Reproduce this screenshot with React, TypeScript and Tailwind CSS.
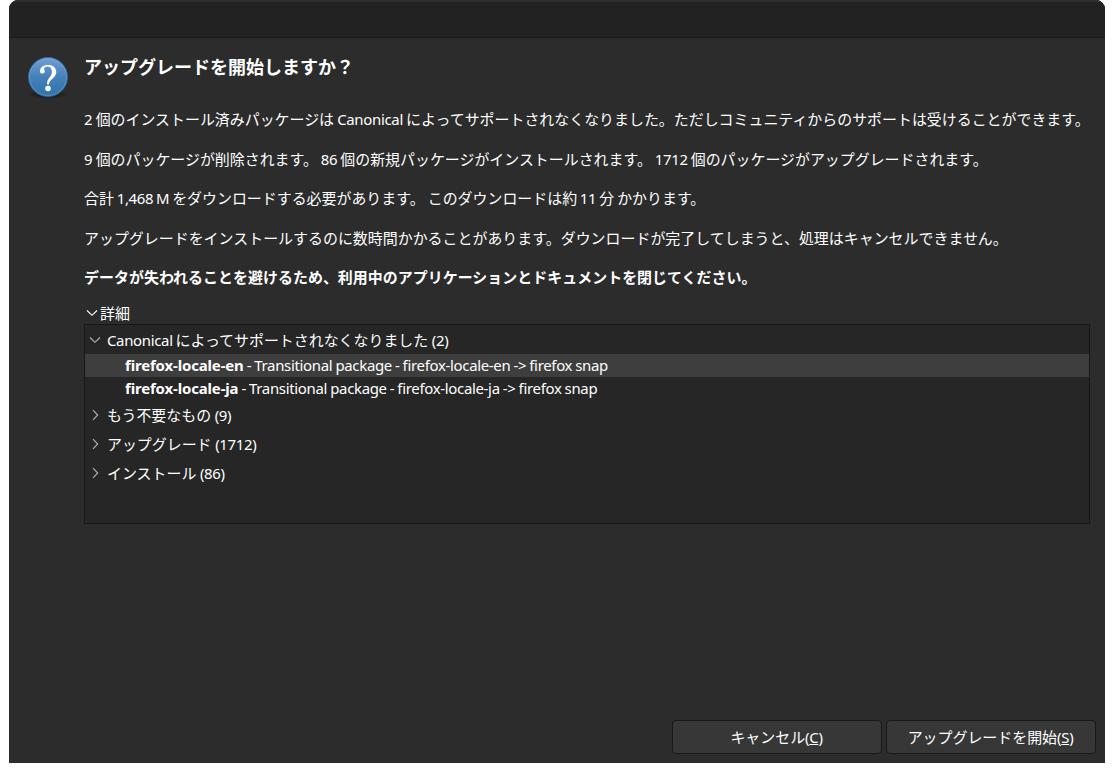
type Run = [string, string?];

const latin = "tracking-[-0.3px]";

function Line({ runs }: { runs: Run[] }) {
  return (
    <p className="flex h-[39.5px] items-center whitespace-pre [word-spacing:-0.8px]">
      {runs.map(([text, className], i) => (
        <span key={i} className={className}>{text}</span>
      ))}
    </p>
  );
}

function Chevron({ open, className }: { open?: boolean; className: string }) {
  return (
    <svg viewBox="0 0 12 12" fill="none" stroke="currentColor" strokeWidth="1.1" className={className}>
      {open ? <path d="M1 3.5 6 8.300 11 3.5" /> : <path d="M4 1.200 8.700 6 4 10.800" />}
    </svg>
  );
}

function Group({ prefix, label, count, open }: { prefix?: string; label: string; count: string; open?: boolean }) {
  return (
    <div className="flex h-[29px] items-center whitespace-pre pl-[4px] pt-[2px]">
      <Chevron open={open} className="size-3 text-[#b4b4b4]" />
      <span className="ml-[6px] tracking-[-0.32px] [word-spacing:-0.8px]">{prefix}</span>
      <span>{label}</span>
      <span className="tracking-[-0.32px]">{count}</span>
    </div>
  );
}

function PackageRow({ name, description, selected }: { name: string; description: string; selected?: boolean }) {
  return (
    <div className={`flex h-[23px] items-center whitespace-pre pl-[40px] ${selected ? "bg-[#3e3e3e]" : ""}`}>
      <b className="tracking-[-0.14px]">{name}</b>
      <span className="tracking-[-0.31px] [word-spacing:-0.5px]">{description}</span>
    </div>
  );
}

export default function App() {
  return (
    <div className="h-[772px] w-[1114px] bg-white pl-[9px] font-['Noto_Sans','Noto_Sans_CJK_JP',sans-serif] text-[14.95px] leading-none text-white">
      <div className="flex h-[763px] w-[1096px] flex-col overflow-hidden rounded-t-[9px] bg-[#2c2c2c]">
        <div className="h-[38px] shrink-0 border-b border-t-2 border-b-[#181818] border-t-[#2f2f2f] bg-[#222222]" />
        <div className="flex grow pl-[18px] pt-[18px]">
          <svg viewBox="0 0 42 44" className="h-[44px] w-[42px] shrink-0">
            <defs>
              <linearGradient id="blue" x1="0" y1="0" x2="0" y2="1">
                <stop offset="0" stopColor="#739fd6" />
                <stop offset="0.5" stopColor="#4580b8" />
                <stop offset="1" stopColor="#2f74a8" />
              </linearGradient>
              <radialGradient id="shade">
                <stop offset="0.6" stopColor="#202020" />
                <stop offset="1" stopColor="#202020" stopOpacity="0" />
              </radialGradient>
            </defs>
            <ellipse cx="21" cy="38" rx="21" ry="5" fill="url(#shade)" />
            <circle cx="21" cy="21" r="19.5" fill="url(#blue)" stroke="#2d6699" />
            <circle cx="21" cy="21" r="18.5" fill="none" stroke="#8fb7e6" strokeOpacity=".4" />
            <path d="M13 15.4C13 11.400 16.400 9 21 9c5 0 8.300 2.700 8.300 7.100 0 6.100-7.100 6.900-7.300 12.400h-1.900c-.4-6.600 4.800-7.700 4.800-12.600 0-3.300-1.700-5.300-4.500-5.300-2.100 0-3.300 1-3.300 2.300 0 1 .7 1.500.7 2.700 0 1.200-.9 2-2.200 2-1.600 0-2.600-.9-2.600-2.200z" fill="#fff" />
            <circle cx="21" cy="32.500" r="2.800" fill="#fff" />
          </svg>
          <div className="ml-[15px] w-[1006px]">
            <h1 className="flex h-[22px] items-center text-[18px] font-bold">アップグレードを開始しますか？</h1>
            <div className="mt-[22px]">
              <Line runs={[["2"], [" 個のインストール済みパッケージは "], ["Canonical", latin], [" によってサポートされなくなりました。ただしコミュニティからのサポートは受けることができます。"]]} />
              <Line runs={[["9"], [" 個のパッケージが削除されます。"], [" 86", latin], [" 個の新規パッケージがインストールされます。"], [" 1712", latin], [" 個のパッケージがアップグレードされます。"]]} />
              <Line runs={[["合計"], [" 1,468 M ", latin], ["をダウンロードする必要があります。"], [" このダウンロードは約"], [" 11 ", latin], ["分 かかります。"]]} />
              <Line runs={[["アップグレードをインストールするのに数時間かかることがあります。ダウンロードが完了してしまうと、処理はキャンセルできません。", "tracking-[0.015px]"]]} />
              <Line runs={[["データが失われることを避けるため、利用中のアプリケーションとドキュメントを閉じてください。", "font-bold tracking-[0.04px]"]]} />
            </div>
            <div className="mt-[5px] flex h-[21px] items-center pl-[2px]">
              <Chevron open className="size-3" />
              <span className="ml-[2px]">詳細</span>
            </div>
            <div className="h-[200px] w-[1006px] border border-[#161616] bg-[#262626]">
              <Group open prefix="Canonical " label="によってサポートされなくなりました" count=" (2)" />
              <PackageRow selected name="firefox-locale-en" description=" - Transitional package - firefox-locale-en -> firefox snap" />
              <PackageRow name="firefox-locale-ja" description=" - Transitional package - firefox-locale-ja -> firefox snap" />
              <Group label="もう不要なもの" count=" (9)" />
              <Group label="アップグレード" count=" (1712)" />
              <Group label="インストール" count=" (86)" />
            </div>
          </div>
        </div>
        <div className="flex h-[43px] shrink-0 gap-1 pl-[663px]">
          <button className="h-[34px] w-[210px] rounded-[4px] border border-[#181818] bg-[#373737] pr-px">キャンセル<span className="tracking-[-0.32px]">(<u>C</u>)</span></button>
          <button className="h-[34px] w-[210px] rounded-[4px] border border-[#181818] bg-[#373737] pr-px">アップグレードを開始<span className="tracking-[-0.32px]">(<u>S</u>)</span></button>
        </div>
      </div>
    </div>
  );
}
